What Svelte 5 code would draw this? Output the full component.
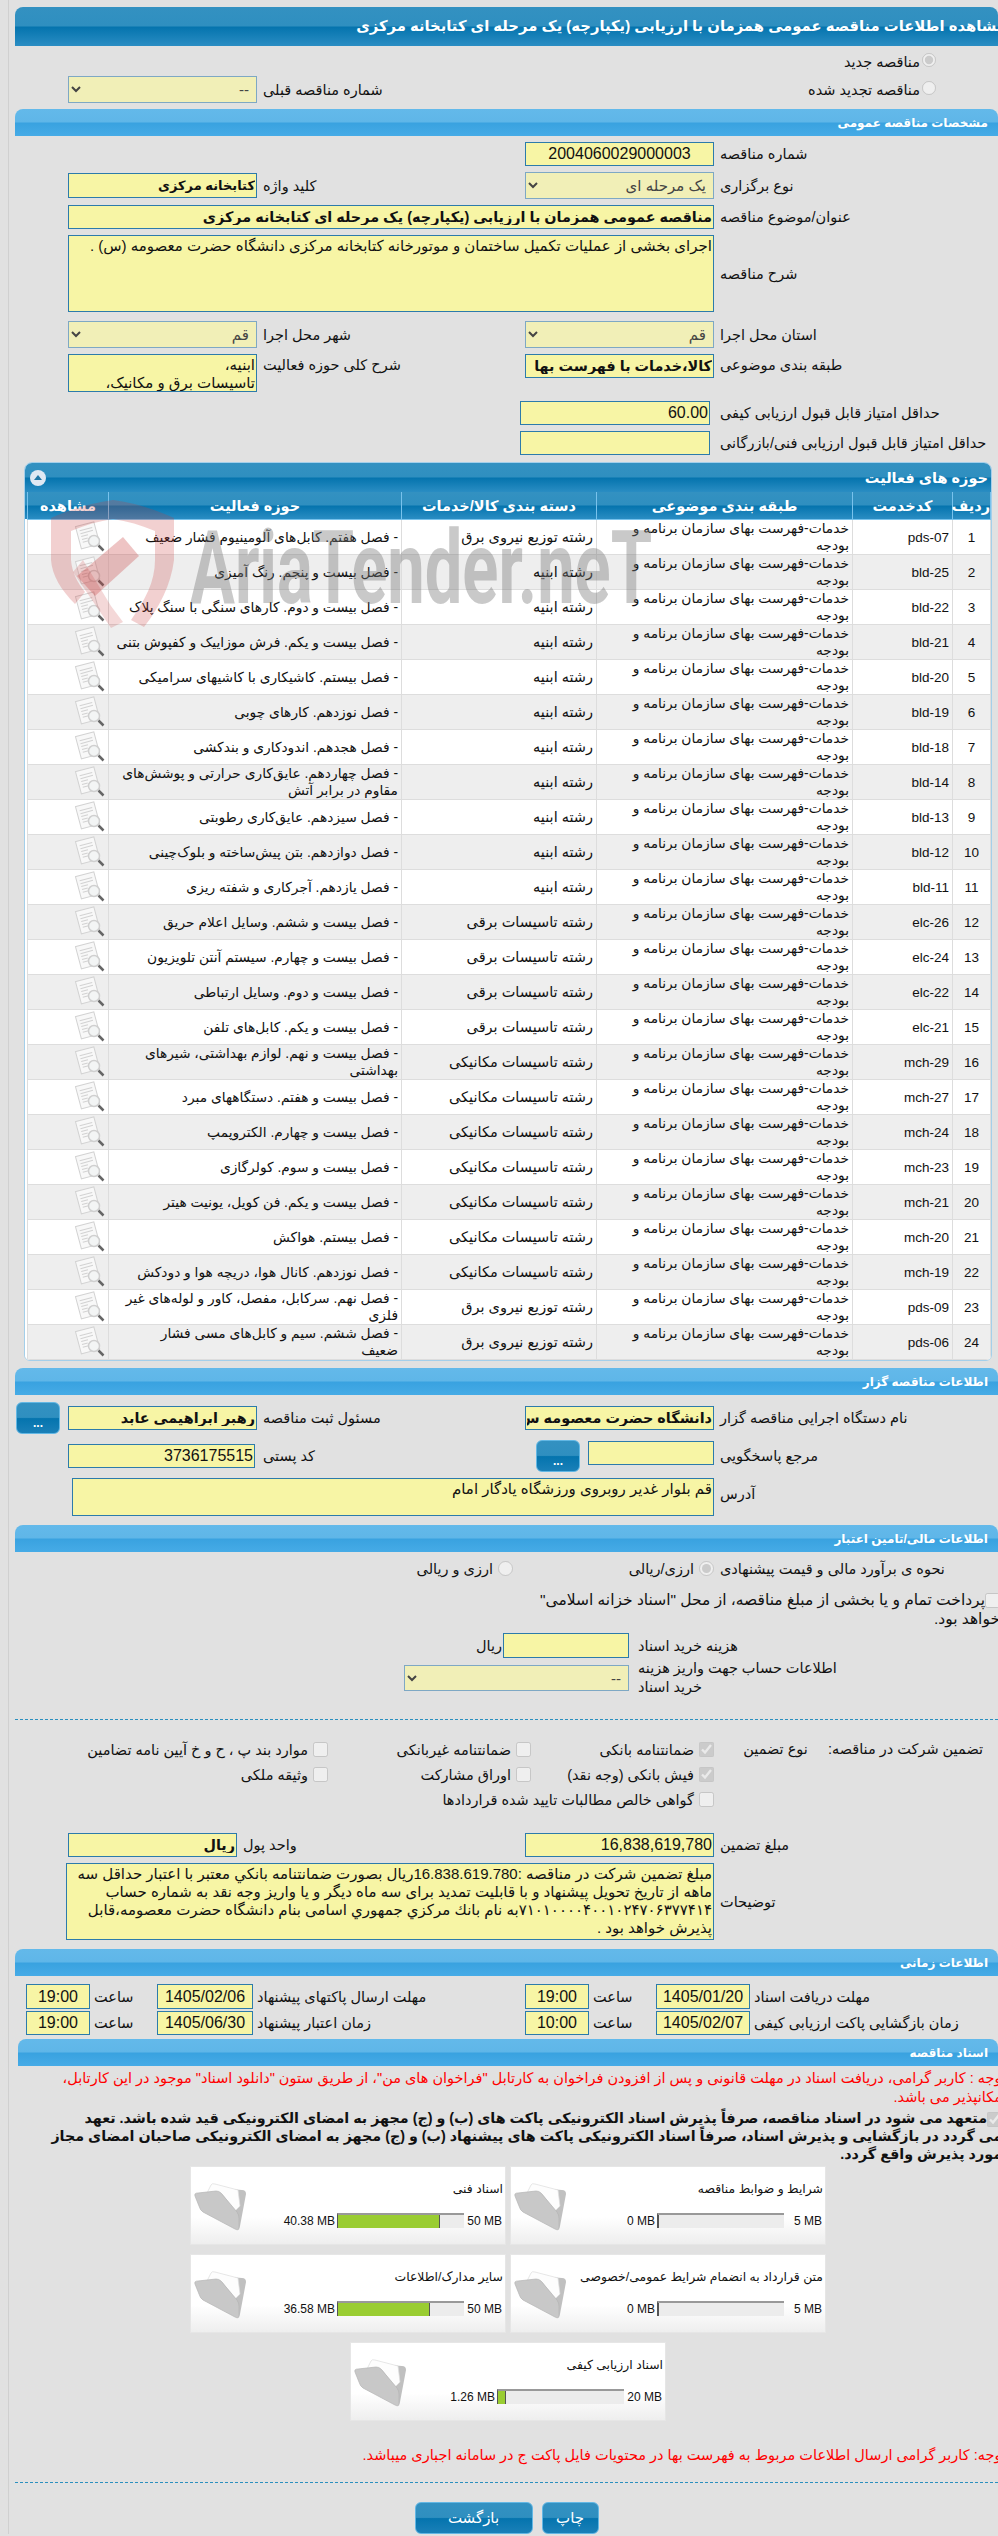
<script>
  const cat = 'خدمات-فهرست بهای سازمان برنامه و\nبودجه'
  const pds = 'رشته توزیع نیروی برق'
  const bld = 'رشته ابنیه'
  const elc = 'رشته تاسیسات برقی'
  const mch = 'رشته تاسیسات مکانیکی'

  const activities = [
    ['pds-07', pds, '- فصل هفتم. کابل‌های آلومینیوم فشار ضعیف'],
    ['bld-25', bld, '- فصل بیست و پنجم. رنگ آمیزی'],
    ['bld-22', bld, '- فصل بیست و دوم. کارهای سنگی با سنگ پلاک'],
    ['bld-21', bld, '- فصل بیست و یکم. فرش موزاییک و کفپوش بتنی'],
    ['bld-20', bld, '- فصل بیستم. کاشیکاری با کاشیهای سرامیکی'],
    ['bld-19', bld, '- فصل نوزدهم. کارهای چوبی'],
    ['bld-18', bld, '- فصل هجدهم. اندودکاری و بندکشی'],
    ['bld-14', bld, '- فصل چهاردهم. عایق‌کاری حرارتی و پوشش‌های\nمقاوم در برابر آتش'],
    ['bld-13', bld, '- فصل سیزدهم. عایق‌کاری رطوبتی'],
    ['bld-12', bld, '- فصل دوازدهم. بتن پیش‌ساخته و بلوک‌چینی'],
    ['bld-11', bld, '- فصل یازدهم. آجرکاری و شفته ریزی'],
    ['elc-26', elc, '- فصل بیست و ششم. وسایل اعلام حریق'],
    ['elc-24', elc, '- فصل بیست و چهارم. سیستم آنتن تلویزیون'],
    ['elc-22', elc, '- فصل بیست و دوم. وسایل ارتباطی'],
    ['elc-21', elc, '- فصل بیست و یکم. کابل‌های تلفن'],
    ['mch-29', mch, '- فصل بیست و نهم. لوازم بهداشتی، شیرهای\nبهداشتی'],
    ['mch-27', mch, '- فصل بیست و هفتم. دستگاههای مبرد'],
    ['mch-24', mch, '- فصل بیست و چهارم. الکتروپمپ'],
    ['mch-23', mch, '- فصل بیست و سوم. کولرگازی'],
    ['mch-21', mch, '- فصل بیست و یکم. فن کویل، یونیت هیتر'],
    ['mch-20', mch, '- فصل بیستم. هواکش'],
    ['mch-19', mch, '- فصل نوزدهم. کانال هوا، دریچه هوا و دودکش'],
    ['pds-09', pds, '- فصل نهم. سرکابل، مفصل، کاور و لوله‌های غیر\nفلزی'],
    ['pds-06', pds, '- فصل ششم. سیم و کابل‌های مسی فشار\nضعیف']
  ]

  const docs = [
    { title: 'شرایط و ضوابط مناقصه', used: 0, max: 5 },
    { title: 'اسناد فنی', used: 40.38, max: 50 },
    { title: 'متن قرارداد به انضمام شرایط عمومی/خصوصی', used: 0, max: 5 },
    { title: 'سایر مدارک/اطلاعات', used: 36.58, max: 50 },
    { title: 'اسناد ارزیابی کیفی', used: 1.26, max: 20 }
  ]

  const guarantees = [
    ['ضمانتنامه بانکی', true],
    ['ضمانتنامه غیربانکی', false],
    ['موارد بند پ ، ح و خ آیین نامه تضامین', false],
    ['فیش بانکی (وجه نقد)', true],
    ['اوراق مشارکت', false],
    ['وثیقه ملکی', false],
    ['گواهی خالص مطالبات تایید شده قراردادها', false]
  ]

  const address = 'قم بلوار غدیر روبروی ورزشگاه یادگار امام'
  const notes = 'مبلغ تضمین شرکت در مناقصه :16.838.619.780ریال بصورت ضمانتنامه بانکي معتبر با اعتبار حداقل سه\nماهه از تاریخ تحویل پیشنهاد و با قابلیت تمدید برای سه ماه دیگر و یا واریز وجه نقد به شماره حساب\n۷۱۰۱۰۰۰۰۴۰۰۱۰۲۴۷۰۶۳۷۷۴۱۴به نام بانك مرکزي جمهوري اسامی بنام دانشگاه حضرت معصومه،قابل\nپذیرش خواهد بود .'
</script>

<div class="page" dir="rtl">
  <main class="main">
    <h1 class="title"><span>مشاهده اطلاعات مناقصه عمومی همزمان با ارزیابی (یکپارچه) یک مرحله ای کتابخانه مرکزی</span></h1>

    <div class="intro">
      <div class="radio-line first">
        <input type="radio" disabled checked />
        <span class="lbl-text">مناقصه جدید</span>
      </div>
      <div class="radio-line second">
        <input type="radio" disabled />
        <span class="lbl-text">مناقصه تجدید شده</span>
        <div class="prev">
          <span class="lbl nowrap">شماره مناقصه قبلی</span>
          <select class="sel" disabled><option>--</option></select>
        </div>
      </div>
    </div>

    <h2 class="bar">مشخصات مناقصه عمومی</h2>
    <div class="form general">
      <span class="lbl">شماره مناقصه</span>
      <input class="fld center" readonly value="2004060029000003" />
      <span></span><span></span>

      <span class="lbl">نوع برگزاری</span>
      <select class="sel" disabled><option>یک مرحله ای</option></select>
      <span class="lbl">کلید واژه</span>
      <input class="fld strong keyword" readonly value="کتابخانه مرکزی" />

      <span class="lbl">عنوان/موضوع مناقصه</span>
      <input class="fld strong wide" readonly value="مناقصه عمومی همزمان با ارزیابی (یکپارچه) یک مرحله ای کتابخانه مرکزی" />

      <span class="lbl">شرح مناقصه</span>
      <textarea class="fld wide desc" readonly value="اجرای بخشی از عملیات تکمیل ساختمان و موتورخانه کتابخانه مرکزی دانشگاه حضرت معصومه (س) ."></textarea>

      <span class="lbl push">استان محل اجرا</span>
      <select class="sel push" disabled><option>قم</option></select>
      <span class="lbl push">شهر محل اجرا</span>
      <select class="sel push" disabled><option>قم</option></select>

      <span class="lbl top">طبقه بندی موضوعی</span>
      <input class="fld strong cat-fld" readonly value="کالا،خدمات با فهرست بها" />
      <span class="lbl top">شرح کلی حوزه فعالیت</span>
      <textarea class="fld activity" readonly value={'ابنیه،\nتاسیسات برق و مکانیک،'}></textarea>

      <span class="lbl push nowrap">حداقل امتیاز قابل قبول ارزیابی کیفی</span>
      <input class="fld score push" readonly value="60.00" />
      <span></span><span></span>

      <span class="lbl nowrap">حداقل امتیاز قابل قبول ارزیابی فنی/بازرگانی</span>
      <input class="fld score" readonly value="" />
    </div>

    <section class="panel">
      <header class="panel-head">
        <span class="collapse"></span>
        <span>حوزه های فعالیت</span>
      </header>
      <div class="tablewrap">
        <table>
          <colgroup>
            <col class="c-idx" /><col class="c-code" /><col class="c-cat" /><col class="c-group" /><col class="c-act" /><col class="c-view" />
          </colgroup>
          <thead>
            <tr>
              <th>ردیف</th><th>کدخدمت</th><th>طبقه بندی موضوعی</th><th>دسته بندی کالا/خدمات</th><th>حوزه فعالیت</th><th>مشاهده</th>
            </tr>
          </thead>
          <tbody>
            {#each activities as row, i}
              <tr>
                <td class="idx">{i + 1}</td>
                <td class="code">{row[0]}</td>
                <td>{cat}</td>
                <td class="group">{row[1]}</td>
                <td>{row[2]}</td>
                <td class="view">
                  <svg width="32" height="32" viewBox="0 0 32 32">
                    <g transform="rotate(-15 13 14)">
                      <rect x="4" y="3" width="19" height="23" fill="#f8f8f8" stroke="#d2d2d2" />
                      <path d="M7 8h13M7 11h13M7 14h7M7 17h6M7 20h8" stroke="#d2d2d2" fill="none" />
                    </g>
                    <circle cx="20" cy="20" r="5.500" fill="#f3f5f5" stroke="#cfcfcf" stroke-width="1.500" />
                    <path d="M24.500 24.500l5 5" stroke="#666" stroke-width="2.500" />
                  </svg>
                </td>
              </tr>
            {/each}
          </tbody>
        </table>
      </div>
      <div class="watermark">
        <svg class="shield" width="124" height="128" viewBox="0 0 124 128">
          <path d="M62 0C85 3 105 10 123 18V60C120 85 108 108 93 127L80 120C94 100 104 82 104 60V31C90 25 76 21 62 19C48 21 34 25 20 31V60C21 72 26 82 34 92L24 104C10 90 1 75 0 60V18C18 10 40 3 62 0Z" fill="#c83c3c" fill-opacity=".24" />
          <path d="M72 37L88 56 44 96 26 76Z" fill="#c83c3c" fill-opacity=".3" />
          <path d="M32 60L60 106 72 122 60 128 22 72Z" fill="#c83c3c" fill-opacity=".2" />
        </svg>
        <span class="mark" dir="ltr">AriaTender.neT</span>
      </div>
    </section>

    <h2 class="bar after-panel">اطلاعات مناقصه گزار</h2>
    <div class="form owner">
      <span class="lbl">نام دستگاه اجرایی مناقصه گزار</span>
      <input class="fld strong inset" readonly value="دانشگاه حضرت معصومه س" />
      <span class="lbl">مسئول ثبت مناقصه</span>
      <input class="fld strong inset" readonly value="رهبر ابراهیمی عابد" />
      <button class="btn more end">...</button>

      <span class="lbl">مرجع پاسخگویی</span>
      <div class="ref">
        <input class="fld short" readonly value="" />
        <button class="btn more">...</button>
      </div>
      <span class="lbl">کد پستی</span>
      <input class="fld postal" readonly value="3736175515" />
      <span></span>

      <span class="lbl">آدرس</span>
      <textarea class="fld address" readonly value={address}></textarea>
    </div>

    <h2 class="bar finance-bar">اطلاعات مالی/تامین اعتبار</h2>
    <div class="finance">
      <div class="estimate">
        <span class="lbl">نحوه ی برآورد مالی و قیمت پیشنهادی</span>
        <div class="opt"><input type="radio" disabled checked /><span>ارزی/ریالی</span></div>
        <div class="opt"><input type="radio" disabled /><span>ارزی و ریالی</span></div>
      </div>
      <p class="treasury"><input type="checkbox" disabled />پرداخت تمام و یا بخشی از مبلغ مناقصه، از محل "اسناد خزانه اسلامی"<br />خواهد بود.</p>
      <div class="purchase">
        <span class="lbl">هزینه خرید اسناد</span>
        <div class="cost"><input class="fld" readonly value="" /><span>ریال</span></div>
        <span class="lbl account">اطلاعات حساب جهت واریز هزینه خرید اسناد</span>
        <select class="sel account-sel" disabled><option>--</option></select>
      </div>
    </div>
    <hr class="dash" />
    <div class="guarantee">
      <div class="guarantee-head">
        <span>تضمین شرکت در مناقصه:</span>
        <span>نوع تضمین</span>
      </div>
      <div class="checks">
        {#each guarantees as g}
          <div class="opt"><input type="checkbox" disabled checked={g[1]} /><span>{g[0]}</span></div>
        {/each}
      </div>
    </div>
    <div class="form amount">
      <span class="lbl">مبلغ تضمین</span>
      <input class="fld" readonly value="16,838,619,780" />
      <span class="lbl">واحد پول</span>
      <input class="fld strong" readonly value="ریال" />

      <span class="lbl">توضیحات</span>
      <textarea class="fld notes" readonly value={notes}></textarea>
    </div>

    <h2 class="bar timing-bar">اطلاعات زمانی</h2>
    <div class="timing">
      <span class="lbl">مهلت دریافت اسناد</span><input class="fld center" readonly value="1405/01/20" />
      <span class="lbl">ساعت</span><input class="fld center" readonly value="19:00" />
      <span class="lbl">مهلت ارسال پاکتهای پیشنهاد</span><input class="fld center" readonly value="1405/02/06" />
      <span class="lbl">ساعت</span><input class="fld center" readonly value="19:00" />

      <span class="lbl">زمان بازگشایی پاکت ارزیابی کیفی</span><input class="fld center" readonly value="1405/02/07" />
      <span class="lbl">ساعت</span><input class="fld center" readonly value="10:00" />
      <span class="lbl">زمان اعتبار پیشنهاد</span><input class="fld center" readonly value="1405/06/30" />
      <span class="lbl">ساعت</span><input class="fld center" readonly value="19:00" />
    </div>

    <h2 class="bar docs-bar">اسناد مناقصه</h2>
    <p class="warn">توجه : کاربر گرامی، دریافت اسناد در مهلت قانونی و پس از افزودن فراخوان به کارتابل "فراخوان های من"، از طریق ستون "دانلود اسناد" موجود در این کارتابل،<br />امکانپذیر می باشد.</p>
    <p class="pledge"><input type="checkbox" disabled checked />متعهد می شود در اسناد مناقصه، صرفاً پذیرش اسناد الکترونیکی پاکت های (ب) و (ج) مجهز به امضای الکترونیکی قید شده باشد. تعهد<br />می گردد در بازگشایی و پذیرش اسناد، صرفاً اسناد الکترونیکی پاکت های پیشنهاد (ب) و (ج) مجهز به امضای الکترونیکی صاحبان امضای مجاز<br />مورد پذیرش واقع گردد.</p>

    <div class="cards">
      {#each docs as doc}
        <article class="card">
          <div class="card-info">
            <div class="card-title">{doc.title}</div>
            <div class="meter">
              <span class="limit" dir="ltr">{doc.max} MB</span>
              <div class="track" dir="ltr"><div class="fill" style="width: {(doc.used / doc.max) * 100}%"></div></div>
              <span class="used" dir="ltr">{doc.used} MB</span>
            </div>
          </div>
          <svg class="folder" width="54" height="50" viewBox="0 0 54 50">
            <path d="M24 6L48 8Q52 8 52 12L46 44Q45 48 42 47L30 20Z" fill="#c0c0c0" />
            <path d="M13 11L17 3Q18 1 21 2L44 8 46 24 41 29 28 12Z" fill="#fdfdfd" stroke="#dddddd" stroke-width=".7" />
            <path d="M1 14Q0 11 4 11L22 9Q25 9 27 11L43 30Q45 33 45 36L45 46Q45 49 41 47L9 30Q6 28 5 24Z" fill="#c8c8c8" stroke="#b4b4b4" stroke-width=".7" />
          </svg>
        </article>
      {/each}
    </div>

    <p class="warn last">توجه: کاربر گرامی ارسال اطلاعات مربوط به فهرست بها در محتویات فایل پاکت ج در سامانه اجباری میباشد.</p>
    <hr class="dash bottom" />
    <div class="actions">
      <button class="btn print">چاپ</button>
      <button class="btn back">بازگشت</button>
    </div>
  </main>
</div>

<style>
  :global(body) {
    background: #e1e1e1;
  }
  .page {
    background: #e1e1e1;
    color: #111;
    font-family: 'Liberation Sans', 'DejaVu Sans', sans-serif;
    font-size: 14.500px;
    height: 2536px;
    overflow: hidden;
    width: 998px;
  }
  .main {
    border-left: 1px solid #d0d0d0;
    margin-left: 8px;
    padding-left: 6px;
    padding-top: 7px;
  }
  .title {
    background: linear-gradient(#3391c1 0, #2f8fc0 48%, #0574ae 52%, #2a8dc3 100%);
    border-radius: 8px 8px 0 0;
    color: #fff;
    font-size: 14.800px;
    height: 39px;
    line-height: 39px;
    margin: 0;
    white-space: nowrap;
  }
  .title span {
    display: block;
    margin-right: -8px;
  }
  .bar {
    background: linear-gradient(#63b9ea 0, #5fb6e8 48%, #39a2e0 52%, #46abe6 100%);
    border-radius: 8px 8px 0 0;
    color: #fff;
    font-size: 12px;
    height: 27px;
    line-height: 29px;
    margin: 0;
    padding-right: 10px;
  }
  .lbl {
    padding-left: 6px;
    text-align: left;
  }
  .nowrap {
    white-space: nowrap;
  }
  .intro {
    height: 63px;
  }
  .radio-line {
    align-items: center;
    display: flex;
    padding-right: 62px;
  }
  .radio-line input {
    height: 14px;
    margin: 0 0 4px 2px;
    width: 14px;
  }
  .first {
    box-sizing: border-box;
    height: 30px;
    padding-top: 2px;
  }
  .second {
    height: 27px;
  }
  .prev {
    align-items: center;
    display: flex;
    justify-content: flex-start;
    margin-left: 53px;
    margin-right: auto;
  }
  .form {
    align-items: center;
    display: grid;
    grid-template-columns: 284px 189px 268px 189px;
    row-gap: 6px;
  }
  .general {
    padding-top: 6px;
  }
  .fld {
    background: #f7f5a5;
    border: 1px solid #2c7bab;
    box-sizing: border-box;
    color: #111;
    font: 15px 'Liberation Sans', 'DejaVu Sans', sans-serif;
    height: 24px;
    margin: 0;
    outline: 0;
    padding: 1px;
    resize: none;
    width: 100%;
  }
  input.fld {
    font-size: 16px;
  }
  input.strong {
    font-size: 14.400px;
    font-weight: 700;
  }
  input.keyword {
    font-size: 13px;
    height: 25px;
  }
  .center {
    text-align: center;
  }
  .sel {
    background: #f1efb7;
    border: 1px solid #7ea8c4;
    border-radius: 0;
    box-sizing: border-box;
    color: #444;
    font: 15px 'Liberation Sans', 'DejaVu Sans', sans-serif;
    height: 27px;
    opacity: 1;
    padding: 0 3px;
    width: 189px;
  }
  .wide {
    grid-column: 2 / 5;
  }
  .desc {
    height: 77px;
    line-height: 18px;
  }
  .push {
    margin-top: 3px;
  }
  .top {
    align-self: start;
    line-height: 22px;
  }
  .cat-fld {
    align-self: start;
  }
  .activity {
    height: 38px;
    line-height: 18px;
  }
  .score {
    justify-self: start;
    margin-right: 4px;
    width: 190px;
  }
  .panel {
    background: #fff;
    border: 1px solid #a4cfea;
    border-radius: 8px 8px 6px 6px;
    margin: 7px 6px 0 9px;
    overflow: hidden;
    position: relative;
  }
  .panel-head {
    align-items: center;
    background: linear-gradient(#3391c1 0, #2f8fc0 48%, #0574ae 52%, #2a8dc3 100%);
    color: #fff;
    display: flex;
    flex-direction: row-reverse;
    font-size: 14.500px;
    font-weight: 700;
    height: 29px;
    justify-content: space-between;
    padding: 0 3px 0 5px;
  }
  .collapse {
    background: #dfe8f3;
    border-radius: 50%;
    height: 16px;
    position: relative;
    width: 16px;
  }
  .collapse::after {
    border-bottom: 5px solid #2176a6;
    border-left: 4px solid transparent;
    border-right: 4px solid transparent;
    content: '';
    left: 4px;
    position: absolute;
    top: 5px;
  }
  .tablewrap {
    background: linear-gradient(#3391c1 0, #2f8fc0 48%, #0574ae 52%, #2a8dc3 100%) top / 100% 27px no-repeat, #fff;
    padding-left: 4px;
  }
  table {
    border-collapse: collapse;
    table-layout: fixed;
    width: 963px;
  }
  .c-idx { width: 38px; }
  .c-code { width: 100px; }
  .c-cat { width: 256px; }
  .c-group { width: 195px; }
  .c-act { width: 293px; }
  .c-view { width: 81px; }
  th {
    border: 1px solid #78c2ec;
    border-top: 0;
    color: #fff;
    font-size: 14.500px;
    height: 27px;
    padding: 0;
    text-align: center;
  }
  td {
    border: 1px solid #dddddd;
    box-sizing: border-box;
    font-size: 13.800px;
    height: 35px;
    line-height: 17px;
    padding: 0 3px;
    text-align: right;
    white-space: pre;
  }
  tbody tr:nth-child(even) td {
    background: #eeeeee;
  }
  .group {
    font-size: 14.500px;
  }
  .idx {
    font-size: 13.500px;
    text-align: center;
  }
  .code {
    font-size: 13.500px;
  }
  .view {
    padding: 0;
  }
  .view svg {
    display: block;
    margin-right: 2px;
  }
  .watermark {
    inset: 0;
    pointer-events: none;
    position: absolute;
  }
  .shield {
    left: 26px;
    position: absolute;
    top: 37px;
  }
  .mark {
    color: rgba(120, 120, 120, 0.4);
    font-family: 'Roboto', 'Liberation Sans', sans-serif;
    font-size: 102px;
    font-weight: 700;
    left: 165px;
    line-height: 1;
    position: absolute;
    top: 54px;
    transform: scaleX(0.655);
    transform-origin: left top;
    white-space: nowrap;
  }
  .after-panel {
    margin-top: 7px;
  }
  .owner {
    align-items: start;
    grid-template-columns: 284px 189px 268px 189px 53px;
    padding-top: 7px;
  }
  .owner .lbl {
    line-height: 32px;
  }
  .inset {
    margin-top: 4px;
  }
  .btn {
    background: linear-gradient(#3391c1 0, #2f8fc0 48%, #0574ae 52%, #1a80b8 100%);
    border: 1px solid #62b7e4;
    border-radius: 6px;
    box-sizing: border-box;
    color: #fff;
    font: 15px 'Liberation Sans', 'DejaVu Sans', sans-serif;
    padding: 0;
  }
  .more {
    font-size: 12px;
    font-weight: 700;
    height: 32px;
    padding-top: 9px;
    width: 44px;
  }
  .end {
    justify-self: end;
    margin-left: 1px;
  }
  .ref {
    align-items: flex-start;
    display: flex;
    gap: 8px;
  }
  .short {
    flex: none;
    margin-top: 1px;
    width: 126px;
  }
  .postal {
    margin-right: 2px;
    margin-top: 4px;
    width: 187px;
  }
  .address {
    grid-column: 2 / 5;
    height: 38px;
    justify-self: start;
    line-height: 18px;
    width: 642px;
  }
  .finance-bar {
    margin-top: 9px;
  }
  .estimate {
    align-items: center;
    box-sizing: border-box;
    display: flex;
    height: 29px;
    padding-top: 4px;
  }
  .estimate .lbl {
    flex: none;
    white-space: nowrap;
    width: 278px;
  }
  .opt {
    align-items: center;
    display: flex;
    gap: 5px;
    white-space: nowrap;
  }
  .opt input {
    flex: none;
    height: 15px;
    margin: 0;
    width: 15px;
  }
  .estimate .opt {
    width: 201px;
  }
  .treasury {
    font-size: 15.500px;
    line-height: 19px;
    margin: 9px -2px 0 0;
    white-space: nowrap;
  }
  .treasury input {
    height: 15px;
    margin: 0;
    vertical-align: middle;
    width: 15px;
  }
  .purchase {
    align-items: center;
    display: grid;
    grid-template-columns: 369px 225px;
    margin-top: 5px;
    row-gap: 1px;
  }
  .purchase .lbl {
    padding-left: 9px;
  }
  .account {
    line-height: 19px;
    padding-right: 150px;
  }
  .cost {
    align-items: center;
    display: flex;
    gap: 1px;
  }
  .cost input {
    height: 25px;
    width: 126px;
  }
  .account-sel {
    height: 26px;
    width: 225px;
  }
  .dash {
    border: 0;
    border-top: 1px dashed #2a8fbf;
    margin: 22px 0 0;
  }
  .guarantee {
    box-sizing: border-box;
    display: flex;
    height: 113px;
    padding-top: 17px;
  }
  .guarantee-head {
    display: flex;
    flex: none;
    gap: 20px;
    line-height: 25px;
    padding-right: 15px;
    white-space: nowrap;
    width: 269px;
  }
  .checks {
    align-content: start;
    display: grid;
    grid-auto-rows: 25px;
    grid-template-columns: 183px 203px auto;
  }
  .amount {
    grid-template-columns: 284px 189px 288px 169px;
  }
  .notes {
    grid-column: 2 / 5;
    height: 77px;
    justify-self: start;
    line-height: 18px;
    white-space: pre;
    width: 648px;
  }
  .timing-bar {
    margin-top: 9px;
  }
  .timing {
    align-items: center;
    display: grid;
    grid-template-columns: 248px 94px 67px 64px 272px 96px 67px 64px;
    grid-template-rows: 25px 24px;
    padding-top: 8px;
    row-gap: 2px;
    white-space: nowrap;
  }
  .timing .lbl {
    padding-left: 4px;
  }
  .timing .fld {
    height: 100%;
  }
  .docs-bar {
    margin-left: 3px;
    margin-top: 4px;
  }
  .warn {
    color: #f00;
    font-size: 14.500px;
    line-height: 19px;
    margin: 3px -8px 0 0;
    white-space: nowrap;
  }
  .pledge {
    color: #111;
    font-size: 14.300px;
    font-weight: 700;
    line-height: 18px;
    margin: 2px -4px 0 0;
    white-space: nowrap;
  }
  .pledge input {
    height: 15px;
    margin: 0;
    vertical-align: middle;
    width: 15px;
  }
  .cards {
    display: flex;
    flex-wrap: wrap;
    gap: 9px 4px;
    justify-content: center;
    margin: 3px 172px 0 175px;
  }
  .card {
    background: linear-gradient(#fff 0, #fff 65%, #eeeeee 100%);
    border: 1px solid #e6e6e6;
    box-sizing: border-box;
    display: flex;
    height: 79px;
    width: 316px;
  }
  .card-info {
    flex: 1;
    min-width: 0;
    padding: 13px 2px 0 0;
  }
  .card-title {
    font-size: 12.400px;
    height: 19px;
    line-height: 19px;
    white-space: nowrap;
  }
  .meter {
    align-items: center;
    display: flex;
    font-size: 12px;
    margin-top: 14px;
  }
  .limit {
    padding-right: 1px;
    text-align: right;
    width: 38px;
  }
  .used {
    margin-right: 2px;
  }
  .track {
    background: #ececec;
    border-left: 1px solid #555;
    border-top: 2px solid #999;
    box-sizing: border-box;
    height: 15px;
    width: 127px;
  }
  .fill {
    background: #9acd32;
    border-right: 1px solid #555;
    box-sizing: border-box;
    height: 13px;
  }
  .folder {
    flex: none;
    margin: 15px 3px 0 3px;
  }
  .last {
    line-height: 20px;
    margin-top: 24px;
  }
  .bottom {
    margin-top: 17px;
  }
  .actions {
    display: flex;
    gap: 9px;
    justify-content: center;
    margin-top: 19px;
  }
  .print {
    height: 32px;
    width: 57px;
  }
  .back {
    height: 32px;
    width: 118px;
  }
</style>
